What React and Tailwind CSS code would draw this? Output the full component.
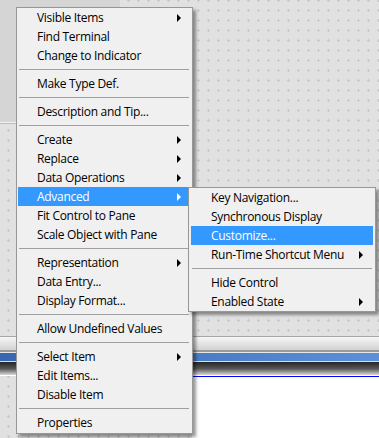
import React from "react";

function Arrow({ white }) {
  return (
    <svg width="4" height="8" viewBox="0 0 4 8" className="shrink-0">
      <path d="M0 0 L4 4 L0 8 Z" fill={white ? "#ffffff" : "#000000"} />
    </svg>
  );
}

function Item({ label, sub, active, pl, pr }) {
  return (
    <div
      className={
        "flex h-[19px] items-center justify-between " +
        pl +
        " " +
        pr +
        (active ? " bg-[#3399ff] text-white" : " text-black")
      }
    >
      <span className="leading-[19px] whitespace-nowrap tracking-[-0.3px]">{label}</span>
      {sub ? <Arrow white={active} /> : null}
    </div>
  );
}

function Sep() {
  return (
    <div className="flex h-[9px] items-center pl-[1px] pr-[1px]">
      <div className="h-[1px] w-full bg-[#a0a0a0]" />
    </div>
  );
}

const menu1 = [
  ["Visible Items", true],
  ["Find Terminal"],
  ["Change to Indicator"],
  "-",
  ["Make Type Def."],
  "-",
  ["Description and Tip..."],
  "-",
  ["Create", true],
  ["Replace", true],
  ["Data Operations", true],
  ["Advanced", true, true],
  ["Fit Control to Pane"],
  ["Scale Object with Pane"],
  "-",
  ["Representation", true],
  ["Data Entry..."],
  ["Display Format..."],
  "-",
  ["Allow Undefined Values"],
  "-",
  ["Select Item", true],
  ["Edit Items..."],
  ["Disable Item"],
  "-",
  ["Properties"],
];

const menu2 = [
  ["Key Navigation..."],
  ["Synchronous Display"],
  ["Customize...", false, true],
  ["Run-Time Shortcut Menu", true],
  "-",
  ["Hide Control"],
  ["Enabled State", true],
];

function Menu({ items, className, pl, pr }) {
  return (
    <div
      className={
        "absolute border border-[#979797] bg-[#f0f0f0] pl-[1px] pr-[2px] shadow-[3px_3px_3px_rgba(0,0,0,0.4)] " +
        className
      }
    >
      {items.map((it, i) =>
        it === "-" ? (
          <Sep key={i} />
        ) : (
          <Item key={i} label={it[0]} sub={it[1]} active={it[2]} pl={pl} pr={pr} />
        )
      )}
    </div>
  );
}

function Grid() {
  return (
    <svg className="absolute inset-0 h-full w-full" aria-hidden="true">
      <defs>
        <pattern id="plus" x="3" y="-5" width="10" height="10" patternUnits="userSpaceOnUse">
          <rect x="4" y="5" width="3" height="1" fill="#c9c9c9" />
          <rect x="5" y="4" width="1" height="3" fill="#c9c9c9" />
        </pattern>
      </defs>
      <rect width="100%" height="100%" fill="#e1e1e1" />
      <rect width="100%" height="100%" fill="url(#plus)" />
    </svg>
  );
}

export default function App() {
  return (
    <div
      className="relative h-[438px] w-[379px] overflow-hidden bg-[#e1e1e1] text-[12px]"
      style={{ fontFamily: '"Open Sans", "Noto Sans", sans-serif' }}
    >
      <div className="flex h-full flex-col">
        <div className="relative h-[336px]">
          <Grid />
          <div className="relative w-[120px]">
            <div className="h-[123px] border-b border-[#f2f2f2] bg-[#d5d5d5]" />
            <div className="h-[1px] bg-[#bdbdbd]" />
          </div>
        </div>
        <div className="h-[1px] bg-[#a6a6a6]" />
        <div className="h-[13px] bg-gradient-to-b from-[#f6f6f6] to-[#d2d2d2]" />
        <div className="h-[2px] bg-[#9a9a9a]" />
        <div className="h-[1px] bg-[#e8e8e8]" />
        <div className="h-[8px] bg-gradient-to-r from-[#3767b2] to-[#5c90d9]" />
        <div className="h-[1px] bg-[#d8e0ee]" />
        <div className="h-[13px] bg-gradient-to-b from-[#262626] via-[#555555] to-[#dadada]" />
        <div className="h-[1px] bg-white" />
        <div className="flex flex-1">
          <div className="relative w-[192px]">
            <Grid />
          </div>
          <div className="flex-1 border-t border-[#0000ff] bg-white" />
        </div>
      </div>

      <Menu items={menu1} className="left-[16px] top-[7px] w-[177px] pb-[1px]" pl="pl-[19px]" pr="pr-[9px]" />
      <Menu items={menu2} className="left-[188px] top-[187px] w-[188px] pl-[2px]" pl="pl-[20px]" pr="pr-[10px]" />
    </div>
  );
}
